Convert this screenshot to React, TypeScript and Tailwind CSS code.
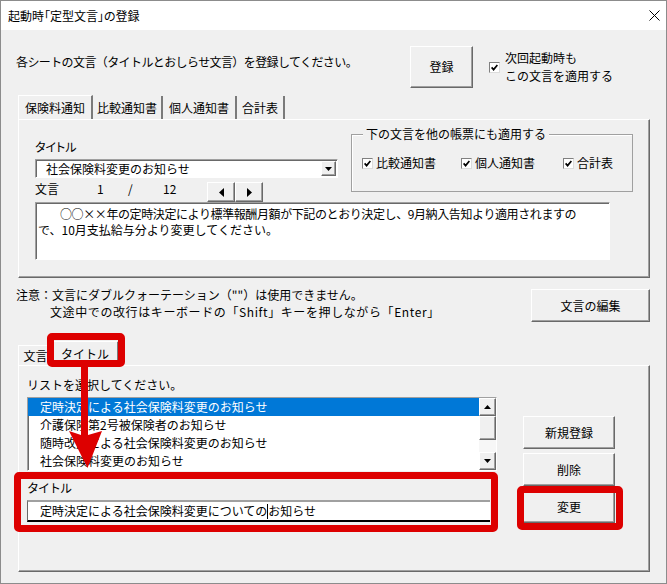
import React from "react";

const raised =
  "bg-[#f0f0f0] border border-t-white border-l-white border-b-[#696969] border-r-[#696969] shadow-[inset_-1px_-1px_0_#a0a0a0]";
const sunken =
  "bg-white border border-t-[#a0a0a0] border-l-[#a0a0a0] border-b-white border-r-white shadow-[inset_1px_1px_0_#696969]";

function Check() {
  return (
    <span className="inline-flex w-[11px] h-[11px] shrink-0 items-center justify-center bg-white border border-t-[#808080] border-l-[#808080] border-b-[#dcdcdc] border-r-[#dcdcdc]">
      <svg width="7" height="7" viewBox="0 0 7 7">
        <path d="M0.6 3.4 L2.6 5.6 L6.4 1" stroke="#000" strokeWidth="1.7" fill="none" />
      </svg>
    </span>
  );
}

function Tri({ dir }: { dir: "up" | "down" | "left" | "right" }) {
  const pts = {
    up: "0,4 3.5,0 7,4",
    down: "0,0 7,0 3.5,4",
    left: "5,0 5,9 0,4.5",
    right: "0,0 0,9 5,4.5",
  }[dir];
  const w = dir === "up" || dir === "down" ? 7 : 5;
  const h = dir === "up" || dir === "down" ? 4 : 9;
  return (
    <svg width={w} height={h} viewBox={`0 0 ${w} ${h}`}>
      <polygon points={pts} fill="#000" />
    </svg>
  );
}

function Btn({ label, cls }: { label: string; cls: string }) {
  return (
    <div className={`${raised} ${cls} flex items-center justify-center leading-[16px]`}>{label}</div>
  );
}

export default function App() {
  return (
    <div className="w-[667px] h-[584px] overflow-hidden bg-[#f0f0f0] text-black text-[12px] font-['Noto_Sans_CJK_JP',sans-serif]">
      <div className="relative w-[667px] h-[584px] flex flex-col border border-[#8c8c8c]">
        {/* title bar */}
        <div className="h-[29px] bg-white flex items-center justify-between pl-[7px] pr-[6px]">
          <span className="leading-[16px] [font-feature-settings:'palt']">起動時「定型文言」の登録</span>
          <svg width="11" height="11" viewBox="0 0 11 11">
            <path d="M0.5 0.5 L10.5 10.5 M10.5 0.5 L0.5 10.5" stroke="#000" strokeWidth="1" />
          </svg>
        </div>

        {/* header row */}
        <div className="mt-[16px] flex h-[42px]">
          <div className="w-[409px] pl-[15px] pt-[8px] leading-[16px] tracking-[-0.6px]">
            各シートの文言（タイトルとおしらせ文言）を登録してください。
          </div>
          <Btn label="登録" cls="w-[63px] h-[42px]" />
          <div className="ml-[16px] flex items-center">
            <Check />
            <div className="ml-[5px] leading-[18px]">
              <div>次回起動時も</div>
              <div>この文言を適用する</div>
            </div>
          </div>
        </div>

        {/* sheet tabs */}
        <div className="mt-[7px] ml-[17px] flex h-[24px] items-end">
          <div className="w-[75px] h-[24px] flex items-center justify-center border-t border-l border-t-white border-l-white border-r-2 border-r-[#7a7a7a]">
            保険料通知
          </div>
          <div className="w-[70px] h-[23px] flex items-center justify-center border-r-2 border-r-[#7a7a7a]">
            比較通知書
          </div>
          <div className="w-[74px] h-[23px] flex items-center justify-center border-r-2 border-r-[#7a7a7a]">
            個人通知書
          </div>
          <div className="w-[48px] h-[23px] flex items-center justify-center border-r-2 border-r-[#7a7a7a]">
            合計表
          </div>
        </div>

        {/* sheet panel */}
        <div className="ml-[17px] w-[632px] h-[159px] border border-t-white border-l-white border-r-[#696969] border-b-[#696969] shadow-[inset_-1px_-1px_0_#a0a0a0] pt-[14px] pl-[16px]">
          <div className="flex items-start">
            <div className="w-[303px] flex flex-col">
              <div className="h-[25px] flex items-center leading-[16px] [font-feature-settings:'palt']">タイトル</div>
              <div className={`${sunken} h-[19px] flex items-center`}>
                <span className="flex-1 pl-[10px] leading-[16px]">社会保険料変更のお知らせ</span>
                <div className={`${raised} w-[15px] h-[15px] mr-px flex items-center justify-center`}>
                  <Tri dir="down" />
                </div>
              </div>
              <div className="h-[24px] flex items-start">
                <span className="w-[62px] pt-[3px] leading-[16px]">文言</span>
                <span className="w-[31px] pt-[3px] leading-[16px]">1</span>
                <span className="w-[35px] pt-[3px] leading-[16px]">/</span>
                <span className="w-[44px] pt-[3px] leading-[16px]">12</span>
                <div className={`${raised} mt-[4px] w-[28px] h-[20px] flex items-center justify-center`}>
                  <Tri dir="left" />
                </div>
                <div className={`${raised} mt-[4px] w-[28px] h-[20px] flex items-center justify-center`}>
                  <Tri dir="right" />
                </div>
              </div>
            </div>
            <div className="ml-[13px] w-[282px] h-[58px] flex flex-col border border-[#a0a0a0] shadow-[inset_1px_1px_0_#fff]">
              <span className="self-start -mt-[9px] ml-[11px] px-[3px] bg-[#f0f0f0] leading-[16px]">
                下の文言を他の帳票にも適用する
              </span>
              <div className="flex items-center mt-[13px] pl-[10px]">
                <div className="w-[99px] flex items-center">
                  <Check />
                  <span className="ml-[3px] leading-[16px]">比較通知書</span>
                </div>
                <div className="w-[102px] flex items-center">
                  <Check />
                  <span className="ml-[3px] leading-[16px]">個人通知書</span>
                </div>
                <div className="flex items-center">
                  <Check />
                  <span className="ml-[3px] leading-[16px]">合計表</span>
                </div>
              </div>
            </div>
          </div>
          <div className={`${sunken} w-[575px] h-[58px] pl-[2px] pt-[3px] leading-[16px]`}>
            <div className="indent-[22px] tracking-[-0.4px] whitespace-nowrap">
              ○○××年の定時決定により標準報酬月額が下記のとおり決定し、9月納入告知より適用されますの
            </div>
            <div>で、10月支払給与分より変更してください。</div>
          </div>
        </div>

        {/* notes */}
        <div className="flex h-[63px] items-start">
          <div className="flex-1 pl-[15px] pt-[8px] leading-[17px]">
            <div>注意：文言にダブルクォーテーション（""）は使用できません。</div>
            <div className="pl-[34px] tracking-[0.6px]">文途中での改行はキーボードの「Shift」キーを押しながら「Enter」</div>
          </div>
          <Btn label="文言の編集" cls="mt-[11px] mr-[16px] w-[119px] h-[33px]" />
        </div>

        {/* edit tabs */}
        <div className="ml-[17px] flex h-[24px] items-end">
          <div className="w-[34px] h-[20px] flex items-center justify-center border-t border-l border-t-white border-l-white">
            文言
          </div>
          <div className="w-[67px] h-[24px] flex items-center justify-center border-t border-l border-t-white border-l-white border-r-2 border-r-[#7a7a7a]">
            タイトル
          </div>
        </div>

        {/* edit panel */}
        <div className="ml-[17px] w-[632px] h-[207px] border border-t-white border-l-white border-r-[#696969] border-b-[#696969] shadow-[inset_-1px_-1px_0_#a0a0a0] pt-[11px] pl-[8px] flex items-start">
          <div className="w-[470px] flex flex-col">
            <div className="h-[16px] leading-[16px]">リストを選択してください。</div>
            <div className={`${sunken} mt-[4px] h-[74px] flex`}>
              <div className="flex-1 flex flex-col">
                <div className="h-[18px] bg-[#0078d7] text-white pl-[12px] leading-[18px]">
                  定時決定による社会保険料変更のお知らせ
                </div>
                <div className="h-[18px] pl-[12px] leading-[18px]">介護保険第2号被保険者のお知らせ</div>
                <div className="h-[18px] pl-[12px] leading-[18px]">随時改定による社会保険料変更のお知らせ</div>
                <div className="h-[18px] pl-[12px] leading-[18px]">社会保険料変更のお知らせ</div>
              </div>
              <div className="w-[17px] flex flex-col">
                <div className={`${raised} h-[18px] flex items-center justify-center`}>
                  <Tri dir="up" />
                </div>
                <div className={`${raised} h-[24px]`} />
                <div className="flex-1 bg-[#f7f7f7]" />
                <div className={`${raised} h-[18px] flex items-center justify-center`}>
                  <Tri dir="down" />
                </div>
              </div>
            </div>
            <div className="mt-[9px] h-[16px] leading-[16px] tracking-[-1px]">タイトル</div>
            <div className="mt-[4px] w-[463px] h-[22px] bg-white border-t-2 border-t-[#a0a0a0] border-l border-l-[#696969] border-b-2 border-b-black flex items-center pl-[12px] leading-[16px]">
              定時決定による社会保険料変更についての
              <span className="inline-block w-px h-[15px] bg-black" />
              お知らせ
            </div>
          </div>
          <div className="ml-[26px] mt-[39px] flex flex-col gap-[4px]">
            <Btn label="新規登録" cls="w-[92px] h-[33px]" />
            <Btn label="削除" cls="w-[92px] h-[33px]" />
            <Btn label="変更" cls="w-[92px] h-[33px]" />
          </div>
        </div>

        {/* callouts */}
        <div className="absolute left-[46px] top-[332px] w-[78px] h-[34px] border-[7px] border-[#dd0000] rounded-[5px]" />
        <div className="absolute left-[13px] top-[471px] w-[484px] h-[60px] border-[7px] border-[#dd0000] rounded-[5px]" />
        <div className="absolute left-[516px] top-[485px] w-[106px] h-[44px] border-[7px] border-[#dd0000] rounded-[5px]" />
        <svg className="absolute left-[59px] top-[366px]" width="50" height="104" viewBox="0 0 50 104">
          <polygon points="21,0 28,0 28,68 42,64 27.5,101 9,64 21,68" fill="#dd0000" />
        </svg>
      </div>
    </div>
  );
}
